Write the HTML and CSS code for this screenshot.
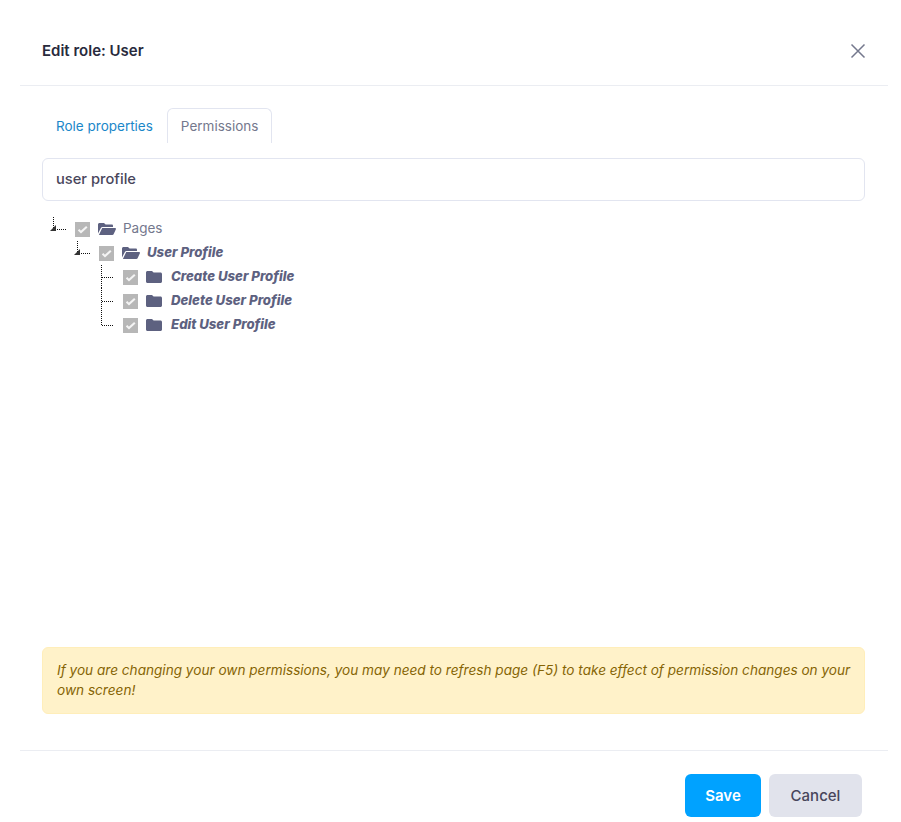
FILE: index.html
```html
<!DOCTYPE html>
<html lang="en">
<head>
    <meta charset="UTF-8">
    <title>Edit role: User</title>
    <link rel="stylesheet" href="styles.css">
</head>
<body>
    <div class="modal">
        <div class="modal-header">
            <h5 class="modal-title">Edit role: User</h5>
            <svg class="close-icon" width="16" height="16" viewBox="0 0 16 16"><path d="M1.5 1.5l13 13M14.5 1.5l-13 13"/></svg>
        </div>
        <div class="modal-body">
            <ul class="tabs">
                <li class="tab">Role properties</li>
                <li class="tab tab-active">Permissions</li>
            </ul>
            <input class="search" type="text" value="user profile">
            <div class="tree">
                <ul class="tree-list">
                    <li>
                        <div class="tree-row">
                            <svg class="connector" width="24" height="24" viewBox="0 0 24 24"><path class="dots" d="M3.5 1v12M7 13.5h9"/><path class="arrow" d="M6 9v6H0z"/></svg>
                            <span class="checkbox"><svg width="15" height="15" viewBox="0 0 16 16"><path d="M3.8 8.2l2.6 2.6L12.6 5"/></svg></span>
                            <svg class="folder" width="18" height="12" viewBox="0 0 18 12"><path d="M1.5 0H6l1.6 1.6h6.2c.7 0 1.2.5 1.2 1.2V4H4.6c-.8 0-1.4.4-1.7 1.1L0 10.4V1.5C0 .7.7 0 1.5 0zM4.2 5h12.9c.7 0 1.1.6.8 1.2l-2.3 5c-.2.5-.7.8-1.3.8H.9z"/></svg>
                            <span class="node-label">Pages</span>
                        </div>
                        <ul class="tree-list">
                            <li>
                                <div class="tree-row">
                                    <svg class="connector" width="24" height="24" viewBox="0 0 24 24"><path class="dots" d="M3.5 1v12M7 13.5h9"/><path class="arrow" d="M6 9v6H0z"/></svg>
                                    <span class="checkbox"><svg width="15" height="15" viewBox="0 0 16 16"><path d="M3.8 8.2l2.6 2.6L12.6 5"/></svg></span>
                                    <svg class="folder" width="18" height="12" viewBox="0 0 18 12"><path d="M1.5 0H6l1.6 1.6h6.2c.7 0 1.2.5 1.2 1.2V4H4.6c-.8 0-1.4.4-1.7 1.1L0 10.4V1.5C0 .7.7 0 1.5 0zM4.2 5h12.9c.7 0 1.1.6.8 1.2l-2.3 5c-.2.5-.7.8-1.3.8H.9z"/></svg>
                                    <span class="node-label node-match">User Profile</span>
                                </div>
                                <ul class="tree-list">
                                    <li>
                                        <div class="tree-row">
                                            <svg class="connector" width="24" height="24" viewBox="0 0 24 24"><path class="dots" d="M3.5 1v24M4 13.5h12"/></svg>
                                            <span class="checkbox"><svg width="15" height="15" viewBox="0 0 16 16"><path d="M3.8 8.2l2.6 2.6L12.6 5"/></svg></span>
                                            <svg class="folder folder-closed" width="16" height="12" viewBox="0 0 16 12"><path d="M1.5 0H6l1.6 1.6h6.9c.8 0 1.5.7 1.5 1.5v7.4c0 .8-.7 1.5-1.5 1.5h-13C.7 12 0 11.3 0 10.5v-9C0 .7.7 0 1.5 0z"/></svg>
                                            <span class="node-label node-match">Create User Profile</span>
                                        </div>
                                    </li>
                                    <li>
                                        <div class="tree-row">
                                            <svg class="connector" width="24" height="24" viewBox="0 0 24 24"><path class="dots" d="M3.5 0v24M4 13.5h12"/></svg>
                                            <span class="checkbox"><svg width="15" height="15" viewBox="0 0 16 16"><path d="M3.8 8.2l2.6 2.6L12.6 5"/></svg></span>
                                            <svg class="folder folder-closed" width="16" height="12" viewBox="0 0 16 12"><path d="M1.5 0H6l1.6 1.6h6.9c.8 0 1.5.7 1.5 1.5v7.4c0 .8-.7 1.5-1.5 1.5h-13C.7 12 0 11.3 0 10.5v-9C0 .7.7 0 1.5 0z"/></svg>
                                            <span class="node-label node-match">Delete User Profile</span>
                                        </div>
                                    </li>
                                    <li>
                                        <div class="tree-row">
                                            <svg class="connector" width="24" height="24" viewBox="0 0 24 24"><path class="dots" d="M3.5 0v14M4 13.5h12"/></svg>
                                            <span class="checkbox"><svg width="15" height="15" viewBox="0 0 16 16"><path d="M3.8 8.2l2.6 2.6L12.6 5"/></svg></span>
                                            <svg class="folder folder-closed" width="16" height="12" viewBox="0 0 16 12"><path d="M1.5 0H6l1.6 1.6h6.9c.8 0 1.5.7 1.5 1.5v7.4c0 .8-.7 1.5-1.5 1.5h-13C.7 12 0 11.3 0 10.5v-9C0 .7.7 0 1.5 0z"/></svg>
                                            <span class="node-label node-match">Edit User Profile</span>
                                        </div>
                                    </li>
                                </ul>
                            </li>
                        </ul>
                    </li>
                </ul>
            </div>
            <div class="alert">If you are changing your own permissions, you may need to refresh page (F5) to take effect of permission changes on your own screen!</div>
        </div>
        <div class="modal-footer">
            <button class="btn btn-save">Save</button>
            <button class="btn btn-cancel">Cancel</button>
        </div>
    </div>
</body>
</html>
```

FILE: styles.css
```css
body {
    margin: 0;
    padding: 0;
    background-color: #fff;
    font-family: Inter, 'Open Sans', sans-serif;
    font-size: 13px;
    color: #646c9a;
}

.modal {
    margin: 0 13px 0 20px;
    display: flex;
    flex-direction: column;
    height: 822px;
    box-sizing: border-box;
}

.modal-header {
    height: 86px;
    box-sizing: border-box;
    padding: 16px 22px 0;
    display: flex;
    align-items: center;
    justify-content: space-between;
    border-bottom: 1px solid #ebedf2;
    flex-shrink: 0;
}

.modal-title {
    margin: 0;
    font-size: 15px;
    font-weight: 600;
    color: #282a3c;
}

.close-icon path {
    fill: none;
    stroke: #74788d;
    stroke-width: 1.5;
}

.modal-body {
    flex: 1;
    padding: 22px 23px 36px 22px;
    display: flex;
    flex-direction: column;
    min-height: 0;
}

.tabs {
    list-style: none;
    margin: 0 0 15px;
    padding: 0;
    display: flex;
    height: 35px;
}

.tab {
    padding: 0 13px;
    line-height: 34px;
    color: #1b87c9;
    font-size: 13.5px;
    border: 1px solid transparent;
    border-bottom: 0;
    border-radius: 6px 6px 0 0;
}

.tab-active {
    color: #74788d;
    border-color: #e2e5f0;
    background-color: #fff;
}

.search {
    height: 43px;
    box-sizing: border-box;
    width: 100%;
    padding: 0 13px 2px;
    border: 1px solid #e2e5f0;
    border-radius: 6px;
    font-family: inherit;
    font-size: 14.7px;
    font-weight: 500;
    color: #48465b;
    outline: none;
    flex-shrink: 0;
}

.tree {
    flex: 1;
    padding: 15px 0 0 8px;
}

.tree-list {
    list-style: none;
    margin: 0;
    padding: 0;
}

.tree-list .tree-list {
    padding-left: 24px;
}

.tree-row {
    display: flex;
    align-items: center;
    height: 24px;
}

.connector {
    flex-shrink: 0;
    margin-right: 1px;
}

.dots {
    fill: none;
    stroke: #111;
    stroke-width: 1;
    stroke-dasharray: 1 1;
    shape-rendering: crispEdges;
}

.arrow {
    fill: #333;
}

.checkbox {
    width: 15px;
    height: 15px;
    background-color: #b7b7b7;
    margin: 2px 8px 0 0;
    flex-shrink: 0;
    display: flex;
}

.checkbox path {
    fill: none;
    stroke: #f4f4f4;
    stroke-width: 2.2;
}

.folder {
    fill: #5d6180;
    flex-shrink: 0;
    margin: 2px 7px 0 0;
}

.folder-closed {
    margin-right: 9px;
}

.node-label {
    font-size: 13.5px;
    color: #74788d;
}

.node-match {
    font-size: 13.2px;
    font-style: italic;
    font-weight: 800;
    color: #5d6180;
}

.alert {
    background-color: #fff2c9;
    border: 1px solid #ffeeba;
    border-radius: 6px;
    color: #856404;
    font-style: italic;
    font-size: 13.6px;
    line-height: 20px;
    padding: 12px 10px 13px 14px;
}

.modal-footer {
    height: 72px;
    box-sizing: border-box;
    border-top: 1px solid #ebedf2;
    padding: 23px 26px 0 0;
    display: flex;
    justify-content: flex-end;
    align-items: flex-start;
    gap: 8px;
    flex-shrink: 0;
}

.btn {
    height: 43px;
    border: 0;
    border-radius: 6px;
    font-family: inherit;
    font-size: 15px;
    font-weight: 600;
}

.btn-save {
    width: 76px;
    background-color: #00a2ff;
    color: #fff;
}

.btn-cancel {
    width: 93px;
    background-color: #e1e3ec;
    color: #48465b;
    font-weight: 500;
}
```
